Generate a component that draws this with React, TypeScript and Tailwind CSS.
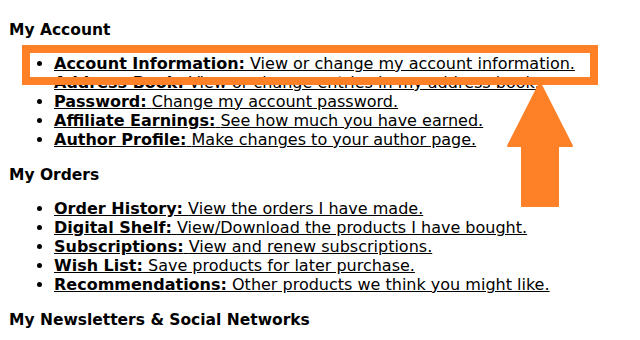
const account = [
  { label: 'Account Information:', desc: 'View or change my account information.' },
  { label: 'Address Book:', desc: 'View or change entries in my address book.' },
  { label: 'Password:', desc: 'Change my account password.' },
  { label: 'Affiliate Earnings:', desc: 'See how much you have earned.' },
  { label: 'Author Profile:', desc: 'Make changes to your author page.' },
];

const orders = [
  { label: 'Order History:', desc: 'View the orders I have made.' },
  { label: 'Digital Shelf:', desc: 'View/Download the products I have bought.' },
  { label: 'Subscriptions:', desc: 'View and renew subscriptions.' },
  { label: 'Wish List:', desc: 'Save products for later purchase.' },
  { label: 'Recommendations:', desc: 'Other products we think you might like.' },
];

function LinkList({ items }: { items: { label: string; desc: string }[] }) {
  return (
    <ul className="list-disc pl-[45px] text-[16px] leading-[19px]">
      {items.map((it) => (
        <li key={it.label}>
          <a href="#" className="text-black underline">
            <b>{it.label}</b> {it.desc}
          </a>
        </li>
      ))}
    </ul>
  );
}

export default function App() {
  return (
    <div
      className="relative h-[340px] w-[640px] overflow-hidden bg-white pl-[9px] pt-[21px] text-black"
      style={{ fontFamily: '"DejaVu Sans", Verdana, sans-serif' }}
    >
      <h2 className="mb-[14px] text-[15.5px] font-bold leading-[19px]">My Account</h2>
      <LinkList items={account} />
      <h2 className="mb-[14px] mt-[17px] text-[15.5px] font-bold leading-[19px]">My Orders</h2>
      <LinkList items={orders} />
      <h2 className="mt-[17px] text-[15.5px] font-bold leading-[19px]">My Newsletters &amp; Social Networks</h2>

      {/* highlight box */}
      <div className="absolute left-[22px] top-[45px] h-[40px] w-[576px] border-[8px] border-[#fe8027]" />

      {/* arrow */}
      <svg className="absolute left-[506px] top-[82px]" width="68" height="127" viewBox="0 0 68 127">
        <path
          d="M34 1 L66 64 L52 64 L52 124 L16 124 L16 64 L2 64 Z"
          fill="#fe8027"
          stroke="#fe8027"
          strokeWidth="2"
          strokeLinejoin="round"
        />
      </svg>
    </div>
  );
}
